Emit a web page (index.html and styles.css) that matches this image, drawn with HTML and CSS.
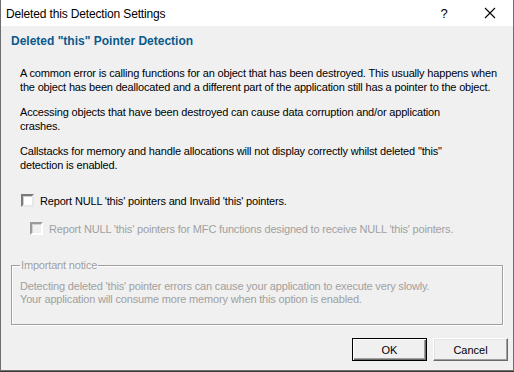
FILE: index.html
```
<!DOCTYPE html>
<html lang="en">
  <head>
    <meta charset="UTF-8" />
    <title>Deleted this Detection Settings</title>
    <link rel="stylesheet" href="styles.css">
  </head>
  <body>
    <div class="window">
      <div class="titlebar">
        <span class="title">Deleted this Detection Settings</span>
        <span class="help">?</span>
        <span class="close">
          <svg width="12" height="12" viewBox="0 0 12 12">
            <path d="M1 1 L11 11 M11 1 L1 11" stroke="#000" stroke-width="1.1" fill="none" />
          </svg>
        </span>
      </div>
      <div class="content">
        <h1 class="heading">Deleted "this" Pointer Detection</h1>
        <div class="text">
          <p>A common error is calling functions for an object that has been destroyed. This usually happens when<br>the object has been deallocated and a different part of the application still has a pointer to the object.</p>
          <p>Accessing objects that have been destroyed can cause data corruption and/or application<br>crashes.</p>
          <p>Callstacks for memory and handle allocations will not display correctly whilst deleted "this"<br>detection is enabled.</p>
        </div>

        <label class="check">
          <span class="box"></span>
          <span>Report NULL 'this' pointers and Invalid 'this' pointers.</span>
        </label>
        <label class="check sub disabled">
          <span class="box"></span>
          <span>Report NULL 'this' pointers for MFC functions designed to receive NULL 'this' pointers.</span>
        </label>

        <fieldset class="group">
          <legend>Important notice</legend>
          <p>Detecting deleted 'this' pointer errors can cause your application to execute very slowly.<br>Your application will consume more memory when this option is enabled.</p>
        </fieldset>

        <div class="buttons">
          <button class="btn default">OK</button>
          <button class="btn">Cancel</button>
        </div>
      </div>
    </div>
  </body>
</html>
```

FILE: styles.css
```
body {
  margin: 0;
  background: #3a3a3a;
  width: 514px;
  height: 372px;
  overflow: hidden;
}
.window {
  width: 512px;
  height: 370px;
  border: 1px solid #6e6e6e;
  border-top: none;
  background: #f0f0f0;
  display: flex;
  flex-direction: column;
}
.titlebar {
  height: 26px;
  background: #fff;
  display: flex;
  align-items: center;
  font-family: "Liberation Sans", Arial, sans-serif;
  font-size: 12px;
  letter-spacing: -0.15px;
  color: #000;
}
.title {
  padding-left: 5px;
  flex: 1;
  padding-top: 1px;
}
.help {
  width: 46px;
  text-align: center;
  font-size: 13px;
}
.close {
  width: 46px;
  display: flex;
  justify-content: center;
}
.content {
  flex: 1;
  font-family: "Liberation Sans", Arial, sans-serif;
  font-size: 11px;
  letter-spacing: -0.17px;
  color: #000;
  display: flex;
  flex-direction: column;
}
.heading {
  font-family: "Liberation Sans", Arial, sans-serif;
  font-size: 12px;
  letter-spacing: 0;
  font-weight: bold;
  color: #0b5a8c;
  margin: 8px 0 0 10px;
}
.text {
  margin: 19px 0 0 19px;
}
.text p {
  margin: 0 0 12px 0;
  line-height: 13.5px;
  white-space: nowrap;
}
.check {
  display: flex;
  align-items: center;
  gap: 6px;
  margin: 10px 0 0 20px;
}
.check.sub {
  margin: 15px 0 0 29px;
}
.box {
  width: 9px;
  height: 9px;
  background: #fff;
  border: 2px solid;
  border-color: #7a7a7a #e8e8e8 #e8e8e8 #7a7a7a;
  box-shadow: inset 1px 1px 0 #d0d0d0;
}
.disabled {
  color: #a0a0a0;
}
.disabled .box {
  background: #f0f0f0;
  border-color: #9a9a9a #fff #fff #9a9a9a;
}
.group {
  margin: 24px 10px 0 10px;
  padding: 9px 8px 18px 8px;
  border: 1px solid #a0a0a0;
  box-shadow: 1px 1px 0 #fff, inset 1px 1px 0 #fff;
  color: #a0a0a0;
}
.group legend {
  padding: 0 1px;
}
.group p {
  margin: 0;
  line-height: 13px;
}
.buttons {
  display: flex;
  justify-content: flex-end;
  gap: 6px;
  margin: 13px 5px 0 0;
}
.btn {
  width: 75px;
  height: 23px;
  font-family: "Liberation Sans", Arial, sans-serif;
  font-size: 11px;
  color: #000;
  background: #f0f0f0;
  border: 1px solid;
  border-color: #fff #696969 #696969 #fff;
  box-shadow: inset -1px -1px 0 #a0a0a0, inset 1px 1px 0 #e3e3e3;
}
.btn.default {
  border: 1px solid #000;
  box-shadow: inset 1px 1px 0 #fff, inset -1px -1px 0 #696969, inset -2px -2px 0 #a0a0a0;
}
```
